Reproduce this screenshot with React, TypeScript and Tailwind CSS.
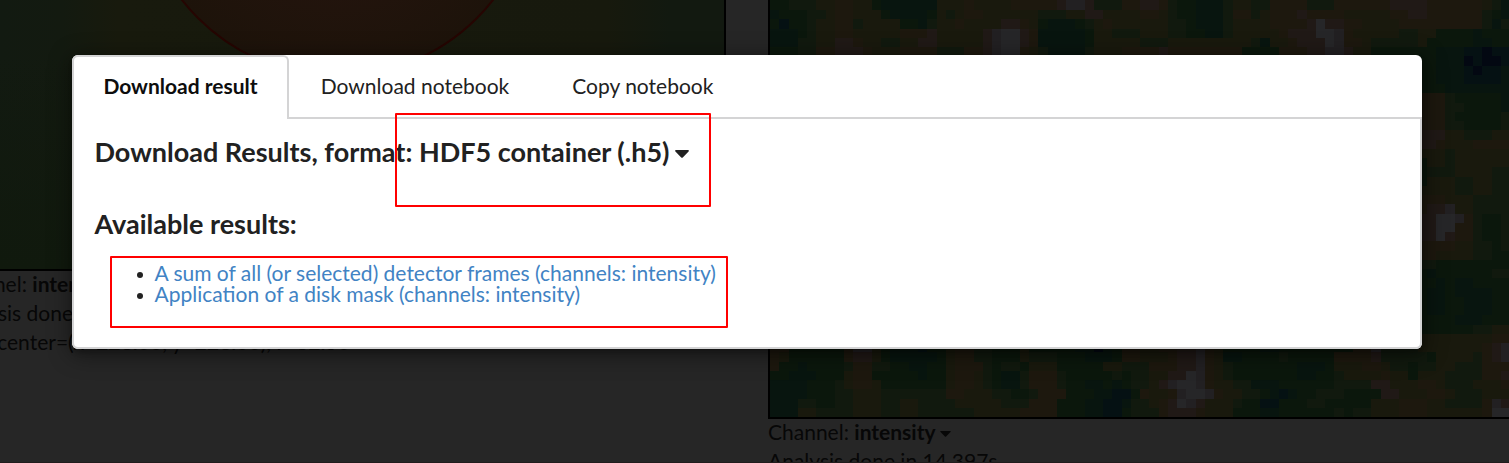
import React from "react";

const CELL = 9.25;

const COLORS: Record<string, string> = {
  k: "#030812",
  n: "#051113",
  t: "#08150f",
  d: "#0b170c",
  g: "#11190e",
  o: "#19190d",
  b: "#1d180e",
  m: "#201916",
  x: "#222022",
  w: "#262628",
};

/* Run-length rows: a colour key followed by the number of cells. */
const TOP = [
  "d2g3o2b2o2d1t6o3b1o4b5m1x2m1g3b2 m2b1g1d2t3g1o2g2b4g3b6m4b6o1g1t1",
  "t1d3g2o1b2o3d1t4d1o1g1o1b2o5o1g1g2o2m2o4 b2o1g1d1d1t3g1b2g1o1b3m1b4o5b2m2b6g1d1t1",
  "d1n1d2g1o2b2g1o4d2t1g1o2b1o4m2b1o1d1t3d1g1o1b1o3 o3g2d1t3g1o4b4m1w1m2b2o4b9g1t1g1",
  "t3d1g1o2b2o5b3m1o5m1x1w2m1b1t5d1o2g3 o3g2d2t2g1o4o1b1m2m1w2x1b1o5g2o2d4t1d3",
  "t3g2o2m2b1o2g2o2m2o5m1x1w2m1b1t5d1o5 g3o9g1t1o2b1m1m2w1x1b2o1g5o1d5t2d2",
  "d3g2b2m3b1o3b4g3b2m1x1w2b1o1g1t4g1o3b2 b2m1b8d4b3m2x2m1o2d5d2t3n1n1k1n2",
];

const SIDE = [
  "d2t3k1n1k2n1", "d2t3n1k1n2t1", "d2t3n4t1", "d3t7", "b3g1d5t1", "b3g2d4t1", "b3g1d5g1",
  "b3g2d4g1", "m3o2g3o2", "m2b1o3b4", "o3g1o6", "d1o2g1o6", "d1g3o4g2", "d1o3g2o2g2",
  "o4g2o2g2", "b3o3g4", "b1m2x1o2g4", "m2w2x1b1g1d2g1", "m2w2b2g1d2g1", "m2w1m1b2g1d2g1",
  "b4o2g2d1g1", "b2o4g2d2", "g2d8", "d1t1d6g2", "d2t1d1t2d4", "d1t2d1t4d2", "d1t2d2t3d2",
  "d1t2d2t3d2", "d4t3d3", "d6g2o2", "o8b2",
];

const BOTTOM = [
  "b2d6b1x2o1d1t3n1d2o1b2g2d3o1d3d2t2k1t1d1b2 o2b2m2x1b1o1d4t2d8b2x1g4o4o3b1m1x1",
  "b1o1d6b1m2o1d1t5d1o1b2g2d3o1g3d1d2t3d1b2 o3b1m2x1b1o1t2d4g1d5b4m1g5d1o4g1b1m1x1",
  "b1d2t1d4g1b2g2d2t2d2o1b3g1d1g2d1o3d1d4o2g2 g1b3m2x1b1o1g1d7t3d1o3b2o1g2d1g2o2g3b3",
  "d2t3d3o1b2d2d3t1d2o1b2o1g1d1t2g1b3g1d4d1g1d1g1 g1o2m2w1x1b1o1g1d7t2d2g1o4b1o2d1o3g4b2m1",
  "t4d3g1o1b2o1d7o1b2o1g1d1t2g1b3g1d2t2d1t1d1g1 g1o1m1x1w2x1b1o2g2t3d6g4m2o3b2o1g3o3b1",
  "t4d3g2o3g7b2o3g2d1d1g1b3d3t2n2d1b1 o2b1x1w2x1b1o2g2d1t1n1t1d2g3d4m2o3b2o1g3o4",
  "t3g2d2g2o3g2o2g4o5g3b3d3t2n2t1g1 g1o1b1m1w1x1m1o3g1d2n2d3g2d5o3b3o2g4b1x1m1",
  "t3o2g4o3g2o2g6o5b4d3t2n2d1g1 g2b1m3b1o3d3t2d6g1d1g2o3b3o6b1w2",
];

function Cells({ rows, firstRow, firstCol }: { rows: string[]; firstRow: number; firstCol: number }) {
  const out: React.ReactNode[] = [];
  rows.forEach((row, r) => {
    let col = firstCol;
    for (const run of row.matchAll(/([a-z])(\d+)/g)) {
      const count = Number(run[2]);
      out.push(
        <rect
          key={`${r}-${col}`}
          x={col * CELL}
          y={(firstRow + r) * CELL + 0.75 - (firstRow + r === 0 ? 1 : 0)}
          width={count * CELL + 0.3}
          height={CELL + (firstRow + r === 0 ? 1.3 : 0.3)}
          fill={COLORS[run[1]]}
        />,
      );
      col += count;
    }
  });
  return <>{out}</>;
}

function Caret({ className }: { className: string }) {
  return (
    <svg viewBox="0 0 14 8" className={className} fill="currentColor" aria-hidden="true">
      <path d="M1 0h12c.9 0 1.2.8.6 1.4L7.8 7.4c-.5.5-1.1.5-1.6 0L.4 1.4C-.2.8.1 0 1 0Z" />
    </svg>
  );
}

function MaskResult() {
  return (
    <section className="-ml-[54px] w-[780px] shrink-0">
      <div className="h-[271px] w-[780px] border-r-2 border-b-2 border-black">
        <svg width="778" height="269" className="block" shapeRendering="geometricPrecision">
          <defs>
            <linearGradient id="field" x1="0" x2="1" y1="0" y2="0">
              <stop offset="0.07" stopColor="#121a11" />
              <stop offset="0.15" stopColor="#131a10" />
              <stop offset="0.22" stopColor="#181a0d" />
              <stop offset="0.85" stopColor="#17190d" />
              <stop offset="0.93" stopColor="#121910" />
            </linearGradient>
            <radialGradient id="disk">
              <stop offset="0.5" stopColor="#23140d" />
              <stop offset="1" stopColor="#1d130a" />
            </radialGradient>
            <linearGradient id="fade" x1="0" x2="0" y1="0" y2="1">
              <stop offset="0.2" stopColor="#10190d" stopOpacity="0" />
              <stop offset="1" stopColor="#10190d" />
            </linearGradient>
          </defs>
          <rect width="778" height="269" fill="url(#field)" />
          <rect width="778" height="269" fill="url(#fade)" />
          <circle cx="391.5" cy="-121" r="197" fill="url(#disk)" stroke="#260502" strokeWidth="2" />
        </svg>
      </div>
      <div className="-mt-[2px] text-[21px] leading-[29px] whitespace-nowrap text-[#070707]">
        <p>Channel: <b>intensity</b></p>
        <p>Analysis done in 14.397s</p>
        <p>Disk: center=(x=228.00, y=228.00), r=62.50</p>
      </div>
    </section>
  );
}

function SumResult() {
  return (
    <section className="ml-[42px] w-[744px] shrink-0">
      <div className="h-[419px] border-b-2 border-l-2 border-black">
        <svg width="742" height="417" className="block" shapeRendering="crispEdges">
          <rect width="742" height="417" fill="#17180d" />
          <Cells rows={TOP} firstRow={0} firstCol={0} />
          <Cells rows={SIDE} firstRow={6} firstCol={70} />
          <Cells rows={BOTTOM} firstRow={37} firstCol={0} />
        </svg>
      </div>
      <div className="-mt-[2px] text-[21px] leading-[29px] whitespace-nowrap text-[#070707]">
        <p className="flex items-center">
          <span>Channel: <b>intensity</b></span>
          <Caret className="mt-[4px] ml-[4px] h-[6px] w-[11px]" />
        </p>
        <p>Analysis done in 14.397s</p>
      </div>
    </section>
  );
}

function ResultLink({ children }: { children: React.ReactNode }) {
  return (
    <li className="flex items-center">
      <span className="mt-[4px] mr-[11.5px] size-[6px] rounded-full bg-[#212121]" />
      <a href="#" className="text-[#4183c4]">{children}</a>
    </li>
  );
}

export default function App() {
  return (
    <div className="relative h-[463px] w-[1509px] overflow-hidden bg-[#262626] font-['Lato',sans-serif]">
      <main className="flex items-start">
        <MaskResult />
        <SumResult />
      </main>
      <div className="absolute bottom-0 left-0 h-px w-full bg-[#211c1c]" />

      <div
        role="dialog"
        className="absolute top-[55px] left-[72px] flex h-[294px] w-[1350px] flex-col rounded-[6px] bg-white text-[#212121] shadow-[1px_4px_5px_0_rgba(0,0,0,0.2),1px_4px_22px_3px_rgba(0,0,0,0.4)]"
      >
        <nav className="flex h-[64px] text-[21px] leading-[21px]">
          <button className="w-[217px] rounded-t-[6px] border-2 border-b-0 border-[#d4d4d5] pb-[6px] font-bold text-[#0d0d0d]">
            Download result
          </button>
          <div className="flex flex-1 items-center border-b-2 border-[#d4d4d5] pb-[2px]">
            <button className="ml-[31.75px]">Download notebook</button>
            <button className="ml-[63px]">Copy notebook</button>
          </div>
        </nav>
        <div className="flex-1 rounded-b-[6px] border-2 border-t-0 border-[#d4d4d5] pt-[16px] pl-[20.5px]">
          <h3 className="flex items-center text-[27px] leading-[34px] font-bold">
            <span>Download Results, format: HDF5 container (.h5)</span>
            <Caret className="mt-[3px] ml-[5px] h-[8px] w-[14px]" />
          </h3>
          <h3 className="mt-[38px] text-[27px] leading-[34px] font-bold">Available results:</h3>
          <ul className="mt-[21px] pl-[42.5px] text-[21px] leading-[21px]">
            <ResultLink>A sum of all (or selected) detector frames (channels: intensity)</ResultLink>
            <ResultLink>Application of a disk mask (channels: intensity)</ResultLink>
          </ul>
        </div>
      </div>

      <div className="pointer-events-none absolute top-[113px] left-[395px] h-[94px] w-[316px] rounded-[1px] border-2 border-[#ff0000]" />
      <div className="pointer-events-none absolute top-[256px] left-[110px] h-[72px] w-[618px] rounded-[1px] border-2 border-[#ff0000]" />
    </div>
  );
}
